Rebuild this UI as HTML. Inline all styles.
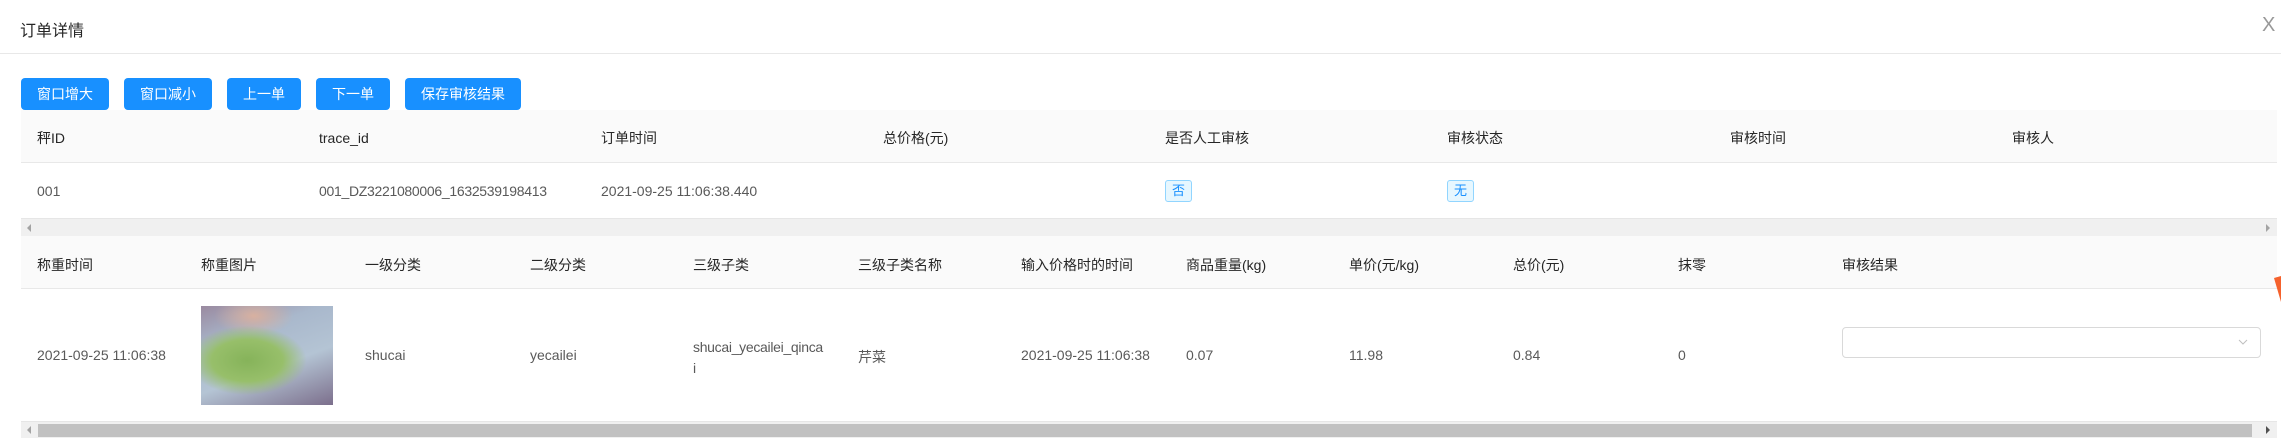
<!DOCTYPE html>
<html><head><meta charset="utf-8"><style>
*{box-sizing:border-box;margin:0;padding:0}
body{width:2281px;height:441px;background:#fff;font-family:"Liberation Sans","Noto Sans CJK SC",sans-serif;font-size:14px;color:#595959;position:relative;overflow:hidden}
.a{position:absolute;white-space:nowrap}
.btn{position:absolute;top:78px;height:32px;background:#1890ff;color:#fff;border-radius:4px;text-align:center;line-height:32px;font-size:14px}
.th{color:#262626}
.tag{position:absolute;top:180px;width:27px;height:22px;background:#e6f7ff;border:1px solid #91d5ff;color:#1890ff;border-radius:3px;font-size:13px;text-align:center;line-height:20px}
</style></head><body>
<div class="a" style="left:20px;top:17px;font-size:16px;color:#262626">订单详情</div>
<div class="a" style="left:2262px;top:14px;font-size:20px;color:#999;font-weight:300">X</div>
<div class="a" style="left:0;top:53px;width:2281px;height:1px;background:#e8e8e8"></div>

<div class="btn" style="left:21px;width:88px">窗口增大</div>
<div class="btn" style="left:124px;width:88px">窗口减小</div>
<div class="btn" style="left:227px;width:74px">上一单</div>
<div class="btn" style="left:316px;width:74px">下一单</div>
<div class="btn" style="left:405px;width:116px">保存审核结果</div>

<div class="a" style="left:21px;top:110px;width:2256px;height:53px;background:#fafafa;border-bottom:1px solid #e8e8e8"></div>
<div class="a th" style="left:37px;top:128px">秤ID</div>
<div class="a th" style="left:319px;top:130px">trace_id</div>
<div class="a th" style="left:601px;top:128px">订单时间</div>
<div class="a th" style="left:883px;top:128px">总价格(元)</div>
<div class="a th" style="left:1165px;top:128px">是否人工审核</div>
<div class="a th" style="left:1447px;top:128px">审核状态</div>
<div class="a th" style="left:1730px;top:128px">审核时间</div>
<div class="a th" style="left:2012px;top:128px">审核人</div>
<div class="a" style="left:37px;top:183px">001</div>
<div class="a" style="left:319px;top:183px;letter-spacing:-0.3px">001_DZ3221080006_1632539198413</div>
<div class="a" style="left:601px;top:183px">2021-09-25 11:06:38.440</div>
<div class="tag" style="left:1165px">否</div>
<div class="tag" style="left:1447px">无</div>
<div class="a" style="left:21px;top:218px;width:2256px;height:18px;background:#f0f0f0;border-top:1px solid #e6e6e6"></div>
<div class="a" style="left:27px;top:224px;width:0;height:0;border-top:4px solid transparent;border-bottom:4px solid transparent;border-right:4px solid #a3a3a3"></div>
<div class="a" style="left:2266px;top:224px;width:0;height:0;border-top:4px solid transparent;border-bottom:4px solid transparent;border-left:4px solid #a3a3a3"></div>

<div class="a" style="left:21px;top:236px;width:2256px;height:53px;background:#fafafa;border-bottom:1px solid #e8e8e8"></div>
<div class="a th" style="left:37px;top:255px">称重时间</div>
<div class="a th" style="left:201px;top:255px">称重图片</div>
<div class="a th" style="left:365px;top:255px">一级分类</div>
<div class="a th" style="left:530px;top:255px">二级分类</div>
<div class="a th" style="left:693px;top:255px">三级子类</div>
<div class="a th" style="left:858px;top:255px">三级子类名称</div>
<div class="a th" style="left:1021px;top:255px">输入价格时的时间</div>
<div class="a th" style="left:1186px;top:255px">商品重量(kg)</div>
<div class="a th" style="left:1349px;top:255px">单价(元/kg)</div>
<div class="a th" style="left:1513px;top:255px">总价(元)</div>
<div class="a th" style="left:1678px;top:255px">抹零</div>
<div class="a th" style="left:1842px;top:255px">审核结果</div>

<div class="a" style="left:37px;top:347px">2021-09-25 11:06:38</div>
<div class="a" style="left:201px;top:306px;width:132px;height:99px;background:radial-gradient(ellipse 45% 35% at 35% 55%,#86b35a 0,#97bf6a 60%,transparent 100%),radial-gradient(ellipse 30% 20% at 40% 10%,#d8b0a0 0,transparent 100%),linear-gradient(160deg,#9a8aa0 0,#a9b8cc 30%,#b4c4d4 60%,#7c6f8c 100%)"></div>
<div class="a" style="left:693px;top:337px;line-height:21px;letter-spacing:-0.3px">shucai_yecailei_qinca<br>i</div>
<div class="a" style="left:365px;top:347px">shucai</div>
<div class="a" style="left:530px;top:347px">yecailei</div>
<div class="a" style="left:858px;top:347px">芹菜</div>
<div class="a" style="left:1021px;top:347px">2021-09-25 11:06:38</div>
<div class="a" style="left:1186px;top:347px">0.07</div>
<div class="a" style="left:1349px;top:347px">11.98</div>
<div class="a" style="left:1513px;top:347px">0.84</div>
<div class="a" style="left:1678px;top:347px">0</div>
<div class="a" style="left:1842px;top:327px;width:419px;height:31px;border:1px solid #d9d9d9;border-radius:4px;background:#fff"></div>
<svg class="a" style="left:2238px;top:338px" width="10" height="8" viewBox="0 0 10 8"><path d="M1 2 L5 6 L9 2" fill="none" stroke="#bfbfbf" stroke-width="1"/></svg>
<svg class="a" style="left:2274px;top:276px" width="7" height="26" viewBox="0 0 7 26"><path d="M0 2 L7 0 L7 26 Z" fill="#f5622d"/></svg>

<div class="a" style="left:21px;top:421px;width:2256px;height:17px;background:#f0f0f0;border-top:1px solid #e6e6e6"></div>
<div class="a" style="left:38px;top:424px;width:2214px;height:13px;background:#c1c1c1"></div>
<div class="a" style="left:27px;top:426px;width:0;height:0;border-top:4px solid transparent;border-bottom:4px solid transparent;border-right:4px solid #a3a3a3"></div>
<div class="a" style="left:2266px;top:426px;width:0;height:0;border-top:4px solid transparent;border-bottom:4px solid transparent;border-left:4px solid #505050"></div>
</body></html>
